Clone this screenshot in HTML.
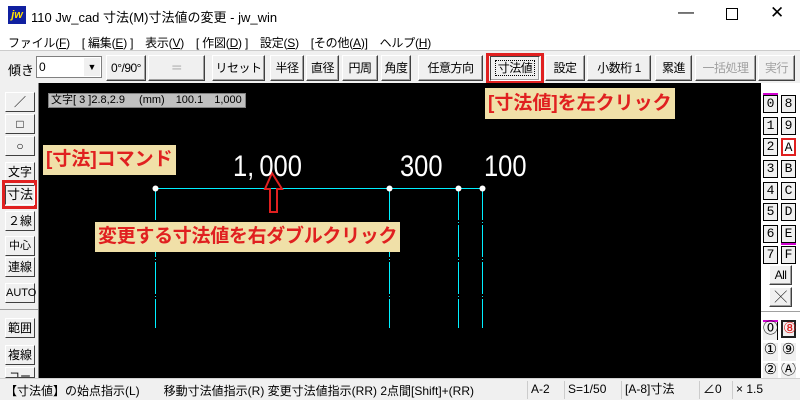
<!DOCTYPE html>
<html><head><meta charset="utf-8"><style>
*{margin:0;padding:0;box-sizing:border-box}
body{width:800px;height:400px;overflow:hidden;background:#f0f0f0;font-family:"Liberation Sans","Noto Sans CJK JP",sans-serif;font-size:12px;color:#000;position:relative}
.a{position:absolute;white-space:nowrap}
.btn{position:absolute;background:#f0f0f0;border:1px solid;border-color:#fff #404040 #404040 #fff;box-shadow:inset -1px -1px #a0a0a0;text-align:center;font-size:12px;line-height:24px;white-space:nowrap;overflow:hidden;letter-spacing:-0.5px}
.lb{position:absolute;left:5px;width:30px;height:20px;background:#f0f0f0;border:1px solid;border-color:#fff #404040 #404040 #fff;text-align:center;font-size:12px;line-height:18px}
.ly{position:absolute;width:15px;height:18px;border:1px solid #000;background:#f0f0f0;text-align:center;font-family:"Liberation Mono",monospace;font-size:13px;line-height:16px}
.lab{position:absolute;background:#f0e0a8;color:#e02020;font-weight:bold;font-size:19px;line-height:30px;padding:0 3px;white-space:nowrap}
.num{position:absolute;color:#fff;font-size:30px;font-family:"Liberation Sans Narrow","Liberation Sans",sans-serif;transform:scaleX(.85);transform-origin:left}
.v{position:absolute;top:188px;width:1px;height:140px;background:repeating-linear-gradient(#00f0ff 0 32px,#000 32px 34px,#00f0ff 34px 35px,#000 35px 37px)}
</style></head><body>
<div class="a" style="left:0;top:0;width:800px;height:30px;background:#fff"></div>
<div class="a" style="left:8px;top:6px;width:18px;height:18px;background:#1020a0;color:#ffe000;font-weight:bold;font-style:italic;font-size:11px;line-height:18px;text-align:center">jw</div>
<div class="a" style="left:31px;top:7px;font-size:13px">110 Jw_cad 寸法(M)寸法値の変更 - jw_win</div>
<div class="a" style="left:678px;top:4px;font-size:16px">—</div>
<div class="a" style="left:726px;top:8px;width:12px;height:12px;border:1px solid #000"></div>
<div class="a" style="left:770px;top:3px;font-size:17px">✕</div>
<div class="a" style="left:0;top:30px;width:800px;height:20px;background:#fff"></div>
<div class="a" style="left:8px;top:34px;font-size:12px;letter-spacing:-0.2px">ファイル(<u>F</u>)　[ 編集(<u>E</u>) ]　表示(<u>V</u>)　[ 作図(<u>D</u>) ]　設定(<u>S</u>)　[その他(<u>A</u>)]　ヘルプ(<u>H</u>)</div>
<div class="a" style="left:0;top:50px;width:800px;height:1px;background:#ccc"></div>
<div class="a" style="left:8px;top:60px;font-size:13px">傾き</div>
<div class="a" style="left:36px;top:56px;width:66px;height:22px;background:#fff;border:1px solid #808080;font-size:12px;line-height:20px;padding-left:2px">0</div>
<div class="a" style="left:84px;top:58px;width:16px;height:18px;background:#f0f0f0;font-size:9px;text-align:center;line-height:18px">▼</div>
<div class="btn" style="left:106px;top:55px;width:40px;height:26px">0°/90°</div>
<div class="btn" style="left:148px;top:55px;width:57px;height:26px;color:#a0a0a0">＝</div>
<div class="btn" style="left:212px;top:55px;width:53px;height:26px">リセット</div>
<div class="btn" style="left:270px;top:55px;width:34px;height:26px">半径</div>
<div class="btn" style="left:306px;top:55px;width:33px;height:26px">直径</div>
<div class="btn" style="left:342px;top:55px;width:36px;height:26px">円周</div>
<div class="btn" style="left:381px;top:55px;width:30px;height:26px">角度</div>
<div class="btn" style="left:418px;top:55px;width:65px;height:26px">任意方向</div>
<div class="a" style="left:486px;top:53px;width:58px;height:31px;border:3px solid #e02020"></div>
<div class="btn" style="left:490px;top:56px;width:50px;height:25px;border-color:#404040 #fff #fff #404040;line-height:22px"><span style="border:1px dotted #000;padding:0 2px">寸法値</span></div>
<div class="btn" style="left:545px;top:55px;width:40px;height:26px">設定</div>
<div class="btn" style="left:587px;top:55px;width:64px;height:26px">小数桁 1</div>
<div class="btn" style="left:655px;top:55px;width:37px;height:26px">累進</div>
<div class="btn" style="left:695px;top:55px;width:61px;height:26px;color:#a0a0a0">一括処理</div>
<div class="btn" style="left:758px;top:55px;width:37px;height:26px;color:#a0a0a0">実行</div>
<div class="a" style="left:39px;top:83px;width:722px;height:295px;background:#000"></div>
<div class="a" style="left:38px;top:83px;width:1px;height:295px;background:#808080"></div>
<div class="a" style="left:48px;top:93px;width:198px;height:15px;background:#c0c0c0;border:1px solid #808080;font-size:11px;line-height:13px;padding-left:2px">文字[ 3 ]2.8,2.9 　(mm)　100.1　1,000</div>
<div class="lb" style="top:92px">／</div>
<div class="lb" style="top:114px">□</div>
<div class="lb" style="top:136px">○</div>
<div class="lb" style="top:162px">文字</div>
<div class="a" style="left:2px;top:180px;width:35px;height:29px;border:3px solid #e02020"></div>
<div class="lb" style="top:185px;border-color:#404040 #fff #fff #404040;font-size:13px">寸法</div>
<div class="lb" style="top:211px">２線</div>
<div class="lb" style="top:236px;font-size:11px">中心線</div>
<div class="lb" style="top:257px">連線</div>
<div class="lb" style="top:283px;font-size:11px">AUTO</div>
<div class="a" style="left:0;top:309px;width:38px;height:1px;background:#a0a0a0"></div>
<div class="lb" style="top:318px">範囲</div>
<div class="lb" style="top:345px">複線</div>
<div class="lb" style="top:367px;height:11px;overflow:hidden;font-size:11px">コーナー</div>
<div class="a" style="left:155px;top:188px;width:328px;height:1px;background:#00f0ff"></div>
<div class="v" style="left:155px"></div>
<div class="v" style="left:389px"></div>
<div class="v" style="left:458px"></div>
<div class="v" style="left:482px"></div>
<svg class="a" style="left:0;top:0" width="800" height="400">
<g fill="#fff"><circle cx="155.5" cy="188.5" r="3"/><circle cx="389.5" cy="188.5" r="3"/><circle cx="458.5" cy="188.5" r="3"/><circle cx="482.5" cy="188.5" r="3"/></g>
<path d="M272 173 L265 189 L270 189 L270 212 L277 212 L277 189 L282 189 Z" fill="none" stroke="#e02020" stroke-width="2"/>
</svg>
<div class="num" style="left:233px;top:150px">1,&#8201;000</div>
<div class="num" style="left:400px;top:150px">300</div>
<div class="num" style="left:484px;top:150px">100</div>
<div class="lab" style="left:43px;top:145px">[寸法]コマンド</div>
<div class="lab" style="left:95px;top:222px;letter-spacing:-0.3px">変更する寸法値を右ダブルクリック</div>
<div class="lab" style="left:485px;top:88px;height:31px;line-height:32px">[寸法値]を左クリック</div>
<div class="a" style="left:761px;top:83px;width:39px;height:295px;background:#fff"></div>
<div class="a" style="left:763px;top:93px;width:15px;height:2px;background:#d000d0"></div>
<div class="ly" style="left:763px;top:95px">0</div><div class="ly" style="left:781px;top:95px">8</div>
<div class="ly" style="left:763px;top:117px">1</div><div class="ly" style="left:781px;top:117px">9</div>
<div class="ly" style="left:763px;top:138px">2</div><div class="ly" style="left:781px;top:138px;border:2px solid #e02020;background:#fff">A</div>
<div class="ly" style="left:763px;top:160px">3</div><div class="ly" style="left:781px;top:160px">B</div>
<div class="ly" style="left:763px;top:182px">4</div><div class="ly" style="left:781px;top:182px">C</div>
<div class="ly" style="left:763px;top:203px">5</div><div class="ly" style="left:781px;top:203px">D</div>
<div class="ly" style="left:763px;top:225px">6</div><div class="ly" style="left:781px;top:225px">E</div>
<div class="ly" style="left:763px;top:246px">7</div><div class="ly" style="left:781px;top:246px">F</div>
<div class="a" style="left:781px;top:243px;width:15px;height:2px;background:#d000d0"></div>
<div class="btn" style="left:769px;top:265px;width:23px;height:20px;line-height:18px">All</div>
<div class="btn" style="left:769px;top:287px;width:23px;height:20px;line-height:18px">╳</div>
<div class="a" style="left:761px;top:311px;width:39px;height:1px;background:#a0a0a0"></div>
<div class="a" style="left:763px;top:320px;width:15px;height:2px;background:#d000d0"></div>
<div class="ly" style="left:763px;top:322px;border:none;border-right:1px solid #000;background:#f0f0f0;font-size:15px">⓪</div>
<div class="ly" style="left:781px;top:320px;border:2px solid #202020;color:#e02020;font-size:15px">⑧</div>
<div class="ly" style="left:763px;top:343px;border:none;background:#f0f0f0;font-size:15px">①</div>
<div class="ly" style="left:781px;top:343px;border:none;background:#f0f0f0;font-size:15px">⑨</div>
<div class="ly" style="left:763px;top:363px;border:none;height:15px;overflow:hidden;background:#f0f0f0;font-size:15px">②</div>
<div class="ly" style="left:781px;top:363px;border:none;height:15px;overflow:hidden;background:#f0f0f0;font-size:15px">Ⓐ</div>
<div class="a" style="left:0;top:378px;width:800px;height:22px;background:#f0f0f0;border-top:1px solid #d0d0d0"></div>
<div class="a" style="left:5px;top:382px;font-size:12px">【寸法値】の始点指示(L)　　移動寸法値指示(R)  変更寸法値指示(RR) 2点間[Shift]+(RR)</div>
<div class="a" style="left:527px;top:381px;width:34px;height:18px;border-left:1px solid #ccc;padding-left:3px;line-height:17px">A-2</div>
<div class="a" style="left:564px;top:381px;width:55px;height:18px;border-left:1px solid #ccc;padding-left:3px;line-height:17px">S=1/50</div>
<div class="a" style="left:621px;top:381px;width:76px;height:18px;border-left:1px solid #ccc;padding-left:3px;line-height:17px">[A-8]寸法</div>
<div class="a" style="left:699px;top:381px;width:31px;height:18px;border-left:1px solid #ccc;padding-left:3px;line-height:17px">∠0</div>
<div class="a" style="left:732px;top:381px;width:48px;height:18px;border-left:1px solid #ccc;padding-left:3px;line-height:17px">×  1.5</div>
</body></html>
